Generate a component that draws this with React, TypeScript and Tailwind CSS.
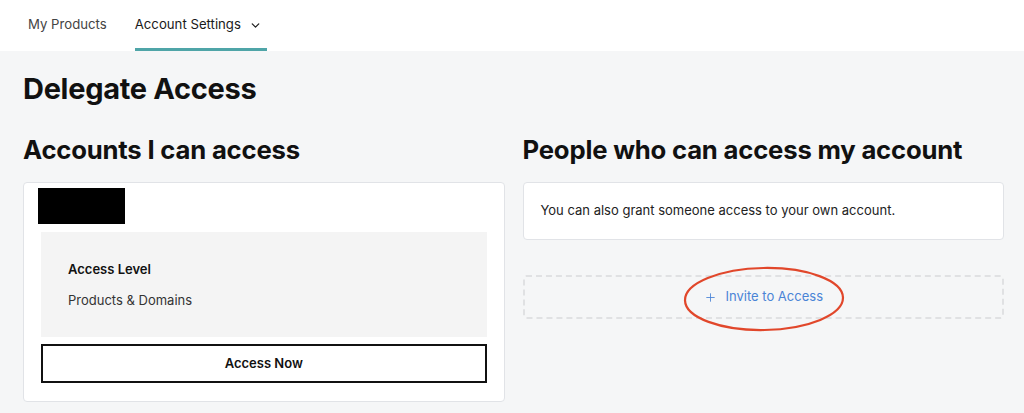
import React from 'react';
import { ChevronDown, Plus } from 'lucide-react';

const font = { fontFamily: 'Inter, "Liberation Sans", sans-serif' };

const TopNav: React.FC = () => (
  <nav className="bg-white h-[51px] flex items-stretch pl-[28px] gap-[28px] text-[13.2px]">
    <div className="flex items-center text-[#444] pb-[1px]">My Products</div>
    <div className="flex items-center gap-[8px] pr-[5px] text-[#1a1a1a] pt-[2px] border-b-[3px] border-[#4fa5a8]">
      Account Settings
      <ChevronDown className="w-[13px] h-[13px]" strokeWidth={2.25} />
    </div>
  </nav>
);

const AccountsColumn: React.FC = () => (
  <section>
    <h2 className="text-[25.7px] font-bold text-[#111] leading-[32px] tracking-[-0.2px]">Accounts I can access</h2>
    <div className="mt-[16px] bg-white border border-[#e1e3e7] rounded-[4px] px-[17px] pt-[5px] pb-[18px]">
      {/* redacted account name */}
      <div className="w-[87px] h-[36px] bg-black -ml-[3px]" />
      <div className="mt-[8px] bg-[#f4f4f4] h-[105px] px-[27px] pt-[28px]">
        <p className="text-[13px] font-semibold text-[#111]">Access Level</p>
        <p className="text-[13px] text-[#333] mt-[11px]">Products &amp; Domains</p>
      </div>
      <button className="mt-[7px] w-full h-[39px] border-2 border-[#111] bg-white text-[13px] font-semibold text-[#111]">
        Access Now
      </button>
    </div>
  </section>
);

const PeopleColumn: React.FC = () => (
  <section>
    <h2 className="text-[25.7px] font-bold text-[#111] leading-[32px] tracking-[-0.2px]">People who can access my account</h2>
    <div className="mt-[16px] bg-white border border-[#e1e3e7] rounded-[4px] h-[58px] flex items-center px-[17px]">
      <p className="text-[13px] text-[#222]">You can also grant someone access to your own account.</p>
    </div>
    <div className="relative mt-[35px] h-[44px] border-2 border-dashed border-[#e0e1e3] rounded-[3px] flex items-center justify-center gap-[9px] text-[13px] text-[#4a84d6]">
      <Plus className="w-[13px] h-[13px]" strokeWidth={1.6} />
      Invite to Access
      {/* red annotation ring */}
      <svg className="absolute left-[157px] top-[-12px] pointer-events-none" width="166" height="68" viewBox="0 0 166 68">
        <ellipse cx="82" cy="34" rx="79" ry="31" fill="none" stroke="#e1472b" strokeWidth="2.2" transform="rotate(-1 82 34)" />
      </svg>
    </div>
  </section>
);

export default function App() {
  return (
    <div className="min-h-screen bg-[#f5f6f7]" style={font}>
      <TopNav />
      <main className="pl-[23px] pr-[20px] pt-[20px]">
        <h1 className="text-[29px] font-bold text-[#111] leading-[36px] tracking-[-0.3px]">Delegate Access</h1>
        <div className="mt-[27px] grid grid-cols-2 gap-[18px]">
          <AccountsColumn />
          <PeopleColumn />
        </div>
      </main>
    </div>
  );
}
